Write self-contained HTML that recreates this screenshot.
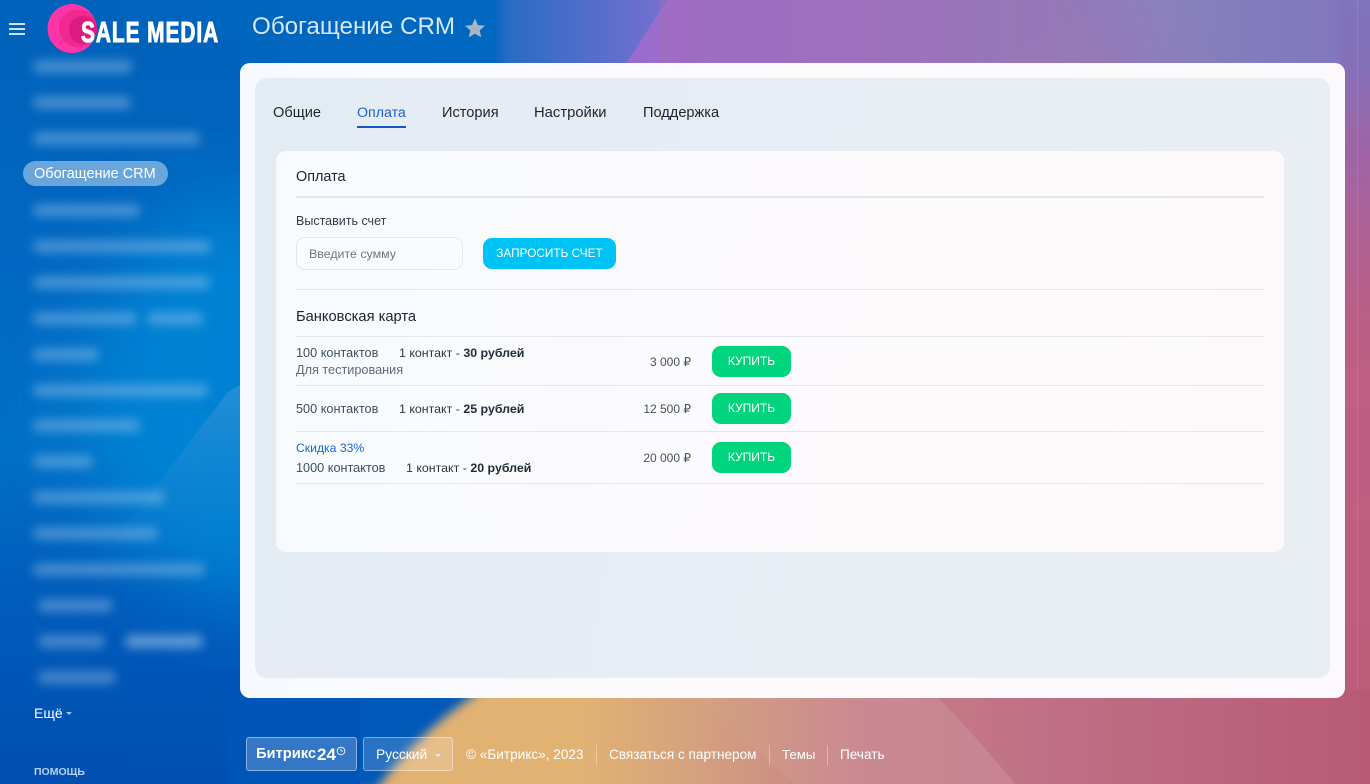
<!DOCTYPE html>
<html lang="ru"><head><meta charset="utf-8"><title>Обогащение CRM</title>
<style>
*{box-sizing:border-box}
html,body{margin:0;padding:0;width:1370px;height:784px;overflow:hidden}
body{position:relative;font-family:"Liberation Sans","DejaVu Sans",sans-serif;background:#0060b8}
.t{position:absolute;white-space:nowrap;line-height:1}
.b{position:absolute;height:13px;border-radius:6px;background:rgba(190,215,245,.36);filter:blur(5px)}
.ln{position:absolute;left:296px;width:968px;height:1px;background:#e4e7ee}
.buy{position:absolute;left:712px;width:79px;height:31px;border-radius:9px;background:#00d47c;color:#fff;font-size:12px;text-align:center;line-height:31px}
.c1{color:#40505c;font-size:12.7px}
.c2{color:#2c3640;font-size:12.4px}
.c2 b{color:#222c36}
.pr{color:#46525c;font-size:12px;text-align:right;width:100px;left:591px}
.tab{font-size:14.6px;color:#1b2530}
.foot{color:#fff;font-size:13.6px}
.sep{position:absolute;top:745px;width:1px;height:20px;background:rgba(255,255,255,.35)}
</style></head><body>
<svg style="position:absolute;left:0;top:0" width="1370" height="784" viewBox="0 0 1370 784">
<defs>
<linearGradient id="top" gradientUnits="userSpaceOnUse" x1="0" y1="0" x2="1370" y2="0">
<stop offset="0" stop-color="#0062ba"/><stop offset=".36" stop-color="#0068c0"/><stop offset=".372" stop-color="#2a6cc4"/><stop offset=".49" stop-color="#7a70d0"/><stop offset="1" stop-color="#7a70d0"/></linearGradient>
<linearGradient id="pur" gradientUnits="userSpaceOnUse" x1="630" y1="0" x2="1345" y2="0">
<stop offset="0" stop-color="#9a6ccf"/><stop offset=".35" stop-color="#9874c4"/><stop offset=".55" stop-color="#8e7cbc"/><stop offset=".75" stop-color="#8580bc"/><stop offset="1" stop-color="#7f74bb"/></linearGradient>
<linearGradient id="pk" gradientUnits="userSpaceOnUse" x1="1200" y1="10" x2="1100" y2="75"><stop offset="0" stop-color="#a86cb0" stop-opacity="0"/><stop offset="1" stop-color="#a86cb0" stop-opacity=".35"/></linearGradient>
<linearGradient id="right" x1="0" y1="0" x2="0" y2="1">
<stop offset="0" stop-color="#7f74bb"/><stop offset=".08" stop-color="#8470b8"/><stop offset=".2" stop-color="#a064a4"/><stop offset=".42" stop-color="#bd5f84"/><stop offset=".7" stop-color="#bf5f80"/><stop offset="1" stop-color="#b85a76"/></linearGradient>
<linearGradient id="left" x1="0" y1="0" x2="0" y2="1">
<stop offset="0" stop-color="#0062ba"/><stop offset=".3" stop-color="#0068c2"/><stop offset=".55" stop-color="#0070c6"/><stop offset=".75" stop-color="#005cbb"/><stop offset="1" stop-color="#004eb0"/></linearGradient>
<linearGradient id="bot" gradientUnits="userSpaceOnUse" x1="240" y1="0" x2="1370" y2="0">
<stop offset=".18" stop-color="#e2b273"/><stop offset=".3" stop-color="#e2b273"/><stop offset=".4" stop-color="#d5a27e"/><stop offset=".55" stop-color="#c58088"/><stop offset=".72" stop-color="#bf6f85"/><stop offset="1" stop-color="#b85a76"/></linearGradient>
<linearGradient id="tri" x1="0" y1="0" x2="0" y2="1"><stop offset="0" stop-color="#2f92d8" stop-opacity=".75"/><stop offset="1" stop-color="#1a80cc" stop-opacity="0"/></linearGradient>
<linearGradient id="band" gradientUnits="userSpaceOnUse" x1="690" y1="0" x2="1000" y2="0"><stop offset="0" stop-color="#fff" stop-opacity=".01"/><stop offset="1" stop-color="#fff" stop-opacity=".12"/></linearGradient>
<filter id="f1" x="-50%" y="-50%" width="200%" height="200%"><feGaussianBlur stdDeviation="40"/></filter>
<filter id="f2" x="-20%" y="-20%" width="140%" height="140%"><feGaussianBlur stdDeviation="5"/></filter>
</defs>
<rect width="1370" height="70" fill="url(#top)"/>
<path d="M667 0H1370V70H622Z" fill="url(#pur)"/>
<path d="M1000 70V55L1118 0H1370V70Z" fill="#fff" opacity=".02"/>
<rect x="660" y="0" width="680" height="70" fill="url(#pk)"/>
<rect x="1340" y="0" width="30" height="784" fill="url(#right)"/>
<rect x="1357" y="0" width="1" height="784" fill="#fff" opacity=".1"/>
<rect x="0" y="40" width="240" height="744" fill="url(#left)"/>
<ellipse cx="240" cy="400" rx="150" ry="200" fill="#0088d8" opacity=".8" filter="url(#f1)"/>
<path d="M228 392L240 385V560H100Z" fill="url(#tri)"/>
<rect x="236" y="690" width="1134" height="94" fill="url(#bot)"/>
<path d="M695 698H938Q975 735 1015 784H796Z" fill="url(#band)"/>
<path d="M230 690H482Q420 730 376 790H230Z" fill="#0058b9" filter="url(#f2)"/>
<rect x="230" y="690" width="130" height="94" fill="#0056b8"/>
</svg>

<!-- header -->
<div style="position:absolute;left:9px;top:23px;width:16px;height:2px;background:#cfe0f2"></div>
<div style="position:absolute;left:9px;top:28px;width:16px;height:2px;background:#cfe0f2"></div>
<div style="position:absolute;left:9px;top:33px;width:16px;height:2px;background:#cfe0f2"></div>
<svg style="position:absolute;left:46px;top:2px" width="52" height="52" viewBox="0 0 52 52">
<circle cx="26" cy="26.500" r="24.500" fill="#fd35a8"/><circle cx="32" cy="26.500" r="19" fill="#f0288f"/><circle cx="37" cy="28" r="14" fill="#dd1a80"/></svg>
<div class="t" style="left:81px;top:19px;font-size:29px;font-weight:700;color:#fff;letter-spacing:1.300px;transform-origin:0 0;transform:scaleX(.72);-webkit-text-stroke:1px #fff">SALE MEDIA</div>
<div class="t" style="left:252px;top:15px;font-size:24.200px;color:#d7e6f6">Обогащение CRM</div>
<svg style="position:absolute;left:464px;top:17px" width="22" height="21" viewBox="0 0 22 21"><path d="M11 1.500L13.900 8 21 8.700 15.700 13.400 17.200 20.300 11 16.700 4.800 20.300 6.300 13.400 1 8.700 8.100 8Z" fill="#a9b5c6"/></svg>

<!-- sidebar -->
<div class="b" style="left:33px;top:60px;width:99px"></div>
<div class="b" style="left:33px;top:96px;width:98px"></div>
<div class="b" style="left:33px;top:132px;width:167px"></div>
<div style="position:absolute;left:23px;top:161px;width:145px;height:25px;border-radius:13px;background:rgba(255,255,255,.42)"></div>
<div class="t" style="left:34px;top:167px;font-size:14.500px;color:#fff">Обогащение CRM</div>
<div class="b" style="left:33px;top:204px;width:107px"></div>
<div class="b" style="left:33px;top:240px;width:178px"></div>
<div class="b" style="left:33px;top:276px;width:177px"></div>
<div class="b" style="left:33px;top:312px;width:104px"></div>
<div class="b" style="left:147px;top:312px;width:56px"></div>
<div class="b" style="left:33px;top:348px;width:66px"></div>
<div class="b" style="left:33px;top:384px;width:175px"></div>
<div class="b" style="left:33px;top:419px;width:107px"></div>
<div class="b" style="left:33px;top:455px;width:60px"></div>
<div class="b" style="left:33px;top:491px;width:132px"></div>
<div class="b" style="left:33px;top:527px;width:125px"></div>
<div class="b" style="left:33px;top:563px;width:172px"></div>
<div class="b" style="left:38px;top:599px;width:75px"></div>
<div class="b" style="left:38px;top:635px;width:67px"></div>
<div class="b" style="left:125px;top:635px;width:78px;background:rgba(190,215,245,.5)"></div>
<div class="b" style="left:38px;top:671px;width:78px"></div>
<div class="t" style="left:34px;top:706px;font-size:14px;color:#fff">Ещё</div>
<div style="position:absolute;left:66px;top:712px;border:3px solid transparent;border-top:3px solid #a8c4e4"></div>
<div class="t" style="left:34px;top:767px;font-size:10.500px;font-weight:700;color:#b5d2ee">ПОМОЩЬ</div>

<!-- main panels -->
<div style="position:absolute;left:240px;top:63px;width:1105px;height:635px;border-radius:10px;background:linear-gradient(90deg,#f6fafe,#fdfafc 50%,#fbf9fb)"></div>
<div style="position:absolute;left:255px;top:78px;width:1075px;height:600px;border-radius:12px;background:linear-gradient(100deg,#e4ecf3,#e8edf4 60%,#e8eef2)"></div>
<div style="position:absolute;left:276px;top:151px;width:1008px;height:401px;border-radius:10px;background:linear-gradient(100deg,#f7fbfe,#fdfafc 60%,#fdf9fb)"></div>

<!-- tabs -->
<div class="t tab" style="left:273px;top:106px">Общие</div>
<div class="t tab" style="left:357px;top:106px;color:#1c5fd0;font-size:14.200px">Оплата</div>
<div style="position:absolute;left:357px;top:126px;width:49px;height:2px;background:#1456cc"></div>
<div class="t tab" style="left:442px;top:106px">История</div>
<div class="t tab" style="left:534px;top:106px;font-size:14.800px">Настройки</div>
<div class="t tab" style="left:643px;top:106px">Поддержка</div>

<!-- card -->
<div class="t" style="left:296px;top:170px;font-size:14.400px;color:#1b2530">Оплата</div>
<div class="ln" style="top:196px;height:2px;background:#e1e5ec"></div>
<div class="t" style="left:296px;top:215px;font-size:12.500px;color:#333e48">Выставить счет</div>
<div style="position:absolute;left:296px;top:237px;width:167px;height:33px;border-radius:9px;border:1px solid #e3e7ee;background:#fafbfd"></div>
<div class="t" style="left:309px;top:248px;font-size:12.400px;color:#6c7680">Введите сумму</div>
<div style="position:absolute;left:483px;top:238px;width:133px;height:31px;border-radius:9px;background:#00c3f5;color:#fff;font-size:11.800px;text-align:center;line-height:31px">ЗАПРОСИТЬ СЧЕТ</div>
<div class="ln" style="top:289px"></div>
<div class="t" style="left:296px;top:310px;font-size:14.700px;color:#1b2530">Банковская карта</div>
<div class="ln" style="top:336px"></div>
<div class="t c1" style="left:296px;top:347px">100 контактов</div>
<div class="t c2" style="left:399px;top:347px">1 контакт - <b>30 рублей</b></div>
<div class="t c1" style="left:296px;top:364px;color:#5f6b76">Для тестирования</div>
<div class="t pr" style="top:356px">3 000 ₽</div>
<div class="buy" style="top:346px">КУПИТЬ</div>
<div class="ln" style="top:385px"></div>
<div class="t c1" style="left:296px;top:403px">500 контактов</div>
<div class="t c2" style="left:399px;top:403px">1 контакт - <b>25 рублей</b></div>
<div class="t pr" style="top:403px">12 500 ₽</div>
<div class="buy" style="top:393px">КУПИТЬ</div>
<div class="ln" style="top:431px"></div>
<div class="t" style="left:296px;top:442px;font-size:12.200px;color:#1c63d6">Скидка 33%</div>
<div class="t c1" style="left:296px;top:462px">1000 контактов</div>
<div class="t c2" style="left:406px;top:462px">1 контакт - <b>20 рублей</b></div>
<div class="t pr" style="top:452px">20 000 ₽</div>
<div class="buy" style="top:442px">КУПИТЬ</div>
<div class="ln" style="top:483px"></div>

<!-- footer -->
<div style="position:absolute;left:246px;top:737px;width:111px;height:34px;border-radius:3px;border:1px solid rgba(255,255,255,.45);background:rgba(255,255,255,.2)"></div>
<div class="t" style="left:256px;top:747px;font-size:14.700px;font-weight:700;color:#fff">Битрикс</div>
<div class="t" style="left:317px;top:746px;font-size:17px;font-weight:700;color:#fff">24</div>
<svg style="position:absolute;left:336px;top:746px" width="10" height="10" viewBox="0 0 10 10"><circle cx="5" cy="5" r="3.800" fill="none" stroke="#fff" stroke-width=".9"/><path d="M5 2.800V5H7" fill="none" stroke="#fff" stroke-width=".8"/></svg>
<div style="position:absolute;left:363px;top:737px;width:90px;height:34px;border-radius:3px;border:1px solid rgba(255,255,255,.4);background:rgba(255,255,255,.16)"></div>
<div class="t" style="left:376px;top:748px;font-size:13.800px;color:#fff">Русский</div>
<div style="position:absolute;left:435px;top:754px;border:3px solid transparent;border-top:3px solid #e8e8ee"></div>
<div class="t foot" style="left:466px;top:748px">© «Битрикс», 2023</div>
<div class="sep" style="left:596px"></div>
<div class="t foot" style="left:609px;top:748px">Связаться с партнером</div>
<div class="sep" style="left:769px"></div>
<div class="t foot" style="left:782px;top:748px;font-size:13.300px">Темы</div>
<div class="sep" style="left:827px"></div>
<div class="t foot" style="left:840px;top:748px">Печать</div>
</body></html>
